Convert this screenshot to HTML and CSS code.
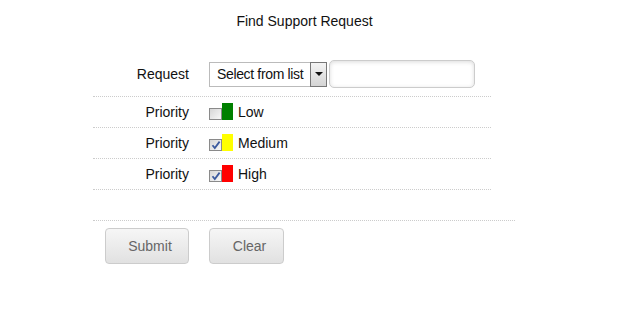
FILE: index.html
```html
<!DOCTYPE html>
<html lang="en">
<head>
  <meta charset="UTF-8" />
  <title>Find Support Request</title>
  <link rel="stylesheet" href="styles.css">
</head>
<body>
  <h1 class="title">Find Support Request</h1>

  <form class="search-form" id="findForm">
    <div class="row row-request">
      <label class="label">Request</label>
      <div class="picker">
        <span class="picker-text">Select from list</span>
        <span class="picker-btn"><span class="arrow"></span></span>
      </div>
      <input type="text" class="text-input" />
    </div>

    <div class="row">
      <span class="label">Priority</span>
      <span class="mark">
        <span class="check"></span>
        <span class="swatch swatch-low"></span>
      </span>
      <span class="prio-name">Low</span>
    </div>
    <div class="row">
      <span class="label">Priority</span>
      <span class="mark">
        <span class="check checked">
          <svg width="10" height="10" viewBox="0 0 10 10"><path d="M1.5 5.2 L3.8 8 L8.6 1.6" fill="none" stroke="#3b5a9e" stroke-width="1.8"/></svg>
        </span>
        <span class="swatch swatch-medium"></span>
      </span>
      <span class="prio-name">Medium</span>
    </div>
    <div class="row">
      <span class="label">Priority</span>
      <span class="mark">
        <span class="check checked">
          <svg width="10" height="10" viewBox="0 0 10 10"><path d="M1.5 5.2 L3.8 8 L8.6 1.6" fill="none" stroke="#3b5a9e" stroke-width="1.8"/></svg>
        </span>
        <span class="swatch swatch-high"></span>
      </span>
      <span class="prio-name">High</span>
    </div>

    <div class="row row-empty"></div>

    <div class="actions">
      <button type="submit" class="btn btn-submit">Submit</button>
      <button type="reset" class="btn btn-clear">Clear</button>
    </div>
  </form>
</body>
</html>
```

FILE: styles.css
```css
body {
  margin: 0;
  font-family: "Liberation Sans", Arial, sans-serif;
  font-size: 14px;
  color: #111;
  background: #fff;
}
.title {
  width: 609px;
  margin: 0;
  padding-top: 13px;
  font-size: 14px;
  font-weight: normal;
  line-height: 16px;
  text-align: center;
}
.search-form {
  margin: 31px 0 0 93px;
}
.row {
  display: flex;
  align-items: center;
  width: 398px;
  height: 30px;
  border-bottom: 1px dotted #ccc;
}
.row-request {
  height: 28px;
  padding-bottom: 8px;
}
.row-empty {
  width: 422px;
}
.label {
  width: 96px;
  margin-right: 20px;
  text-align: right;
}
.picker {
  display: flex;
  align-items: center;
  width: 118px;
  height: 25px;
  box-sizing: border-box;
  border: 1px solid #bbb;
  background: #fff;
}
.picker-text {
  flex: 1;
  padding-left: 7px;
  letter-spacing: -0.35px;
  white-space: nowrap;
}
.picker-btn {
  display: flex;
  align-items: center;
  justify-content: center;
  width: 17px;
  height: 25px;
  margin-right: -1px;
  box-sizing: border-box;
  border: 1px solid #777;
  background: linear-gradient(#f4f4f4, #d4d4d4);
}
.arrow {
  border-left: 4px solid transparent;
  border-right: 4px solid transparent;
  border-top: 4px solid #111;
}
.text-input {
  width: 146px;
  height: 28px;
  margin: 0 0 0 2px;
  padding: 0 6px;
  box-sizing: border-box;
  border: 1px solid #ccc;
  border-radius: 5px;
  box-shadow: inset 0 1px 4px rgba(0, 0, 0, 0.15);
  font: inherit;
}
.mark {
  display: flex;
  align-items: flex-end;
  height: 17px;
  margin-top: -1px;
}
.check {
  display: flex;
  align-items: center;
  justify-content: center;
  width: 13px;
  height: 12px;
  box-sizing: border-box;
  border: 1px solid #8a8a8a;
  background: linear-gradient(135deg, #d6d6d6, #f8f8f8);
}
.swatch {
  width: 11px;
  height: 17px;
}
.swatch-low { background: #008000; }
.swatch-medium { background: #ffff00; }
.swatch-high { background: #ff0000; }
.prio-name {
  margin-left: 5px;
}
.actions {
  display: flex;
  gap: 20px;
  margin: 7px 0 0 12px;
}
.btn {
  height: 36px;
  padding: 0 0 0 6px;
  box-sizing: border-box;
  border: 1px solid #ccc;
  border-radius: 4px;
  background: linear-gradient(#f6f6f6, #e1e1e1);
  color: #666;
  font: inherit;
  cursor: pointer;
}
.btn-submit { width: 84px; }
.btn-clear { width: 75px; }
```
